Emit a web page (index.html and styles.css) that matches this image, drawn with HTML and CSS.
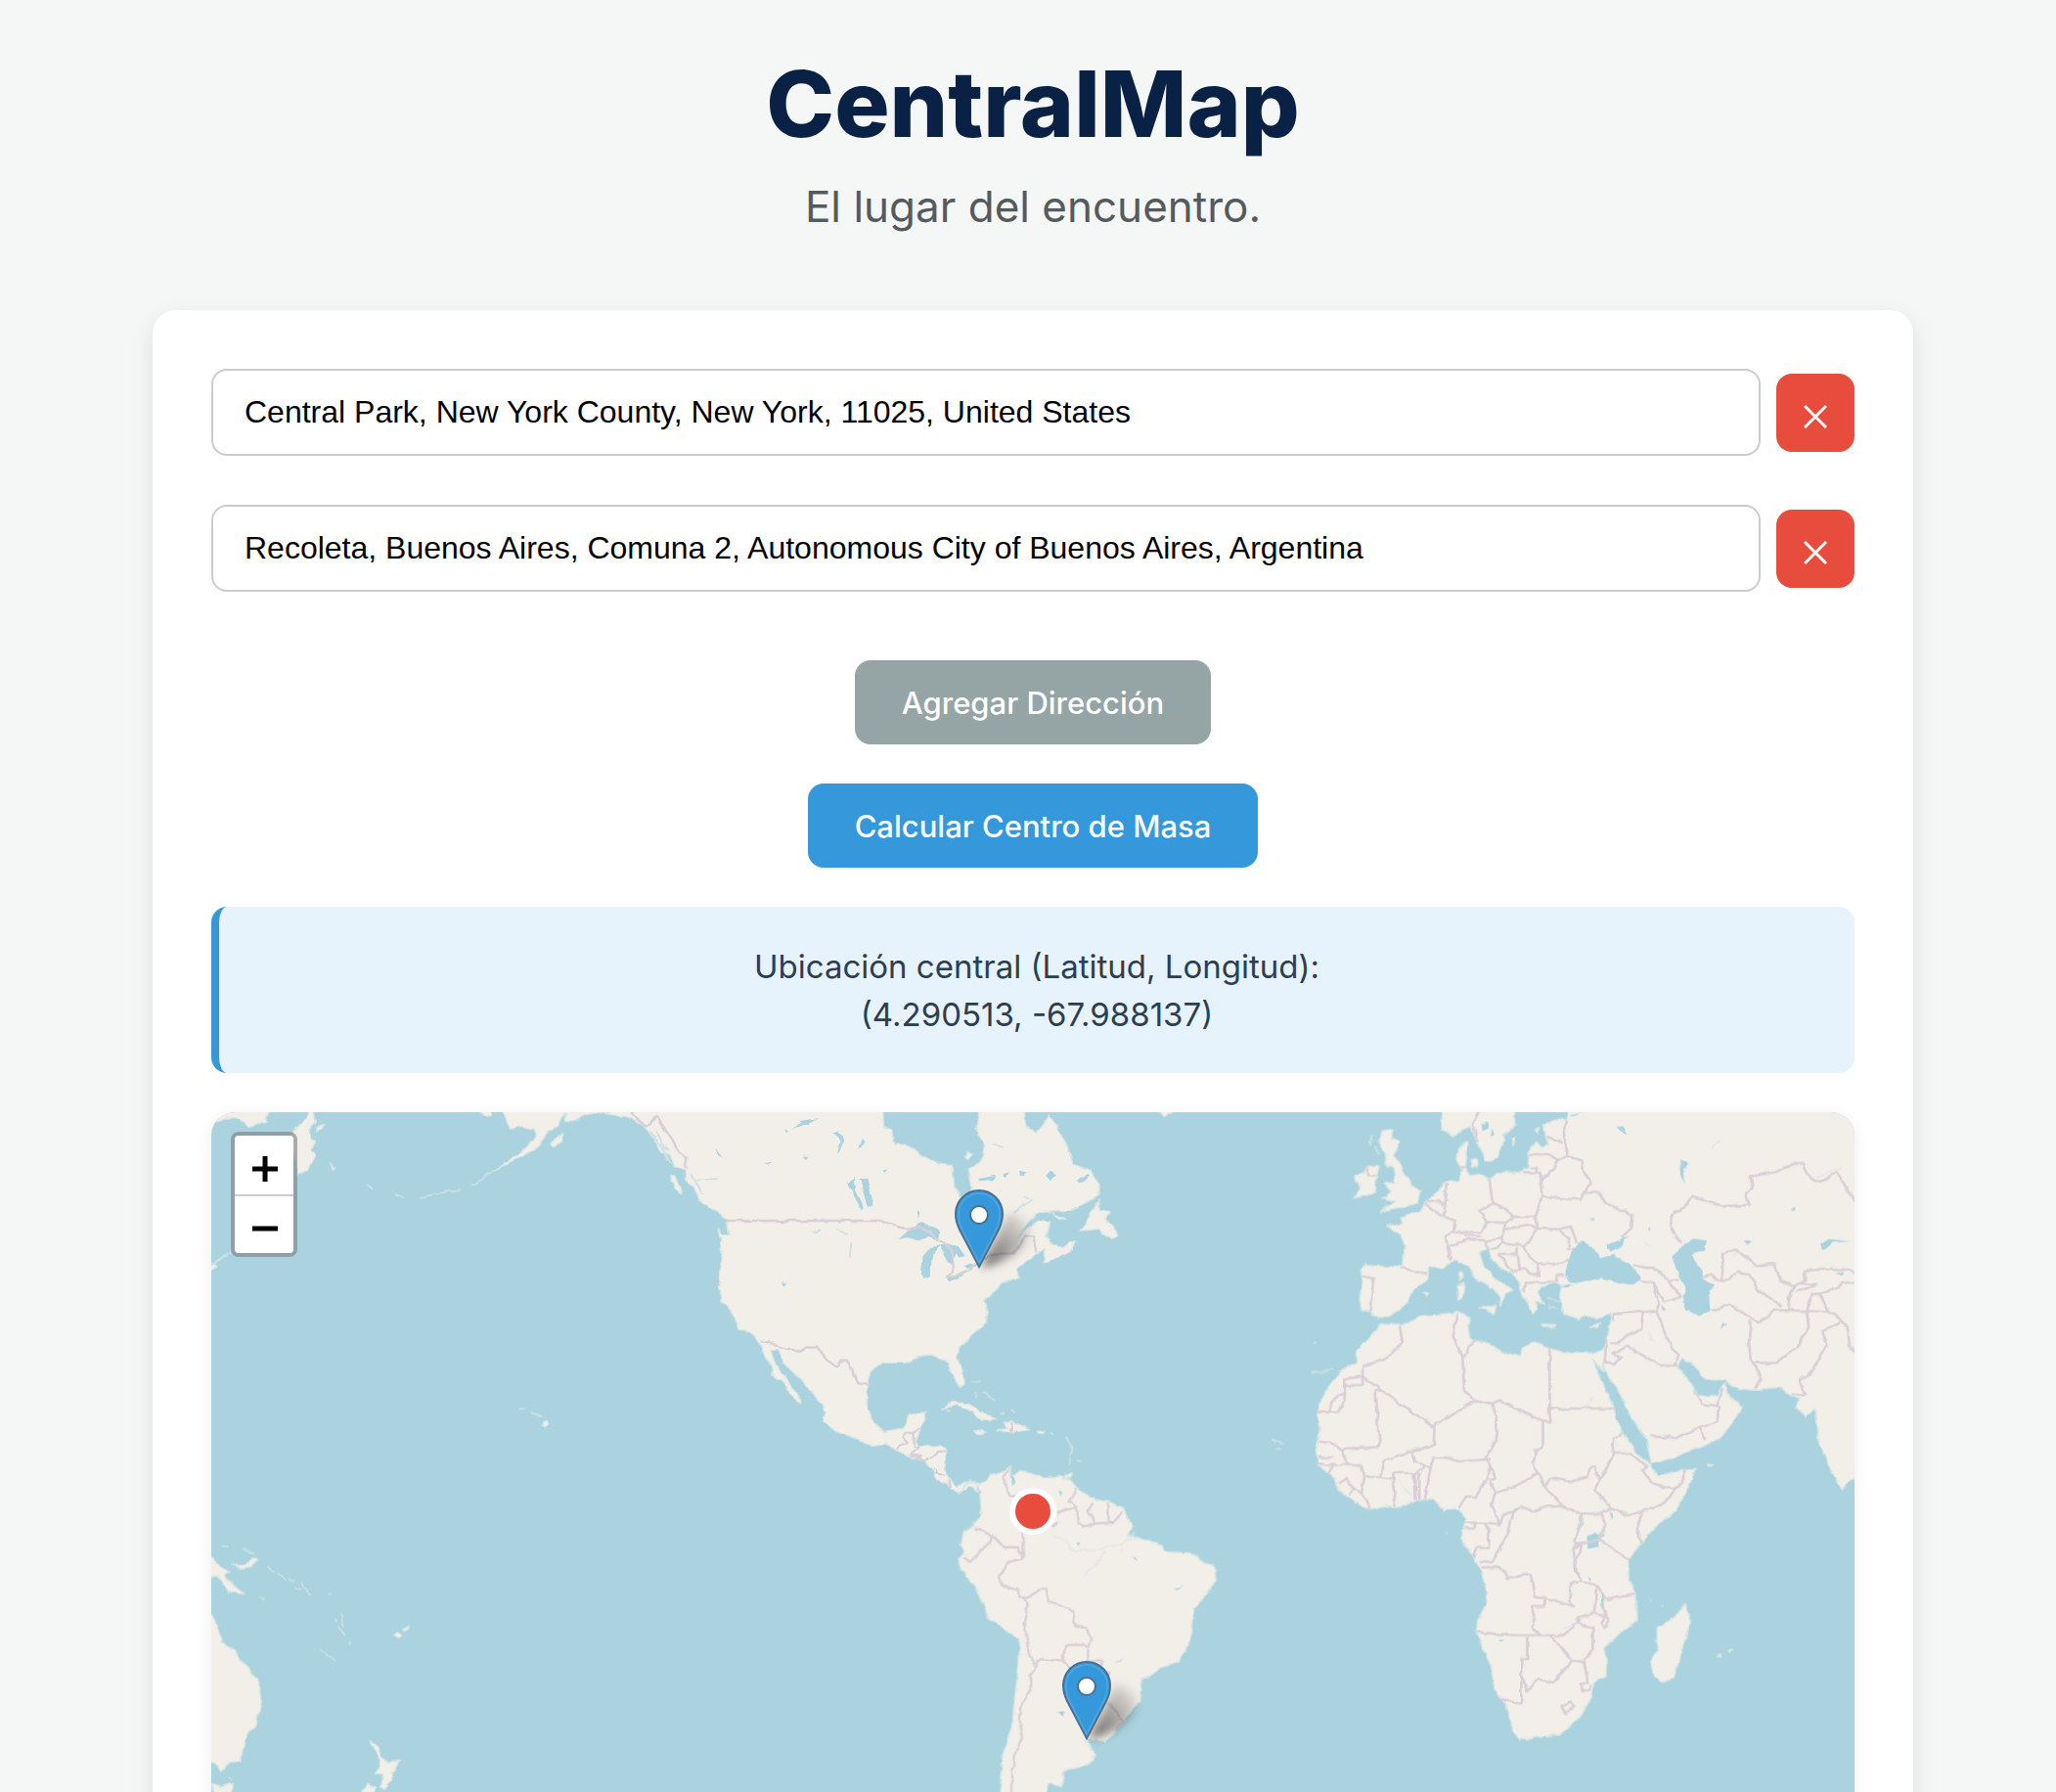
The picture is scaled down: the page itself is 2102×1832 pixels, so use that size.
FILE: index.html
```html
<!DOCTYPE html>
<html lang="es">
<head>
<meta charset="utf-8">
<meta name="viewport" content="width=device-width, initial-scale=1">
<title>CentralMap</title>
<link rel="stylesheet" href="styles.css">
</head>
<body>
<div class="page">
  <header class="header">
    <h1 class="title">CentralMap</h1>
    <p class="subtitle">El lugar del encuentro.</p>
  </header>
  <main class="card">
    <form class="form">
      <div class="addresses">
        <div class="address">
          <input class="address-input" type="text" aria-label="Dirección 1" value="Central Park, New York County, New York, 11025, United States">
          <button class="remove" type="button" aria-label="Eliminar dirección 1"><svg width="24" height="24" viewBox="0 0 24 24"><path d="M1 1 23 23M23 1 1 23"/></svg></button>
        </div>
        <div class="address">
          <input class="address-input" type="text" aria-label="Dirección 2" value="Recoleta, Buenos Aires, Comuna 2, Autonomous City of Buenos Aires, Argentina">
          <button class="remove" type="button" aria-label="Eliminar dirección 2"><svg width="24" height="24" viewBox="0 0 24 24"><path d="M1 1 23 23M23 1 1 23"/></svg></button>
        </div>
      </div>
      <button class="action action-add" type="button">Agregar Dirección</button>
      <button class="action action-calc" type="button">Calcular Centro de Masa</button>
    </form>
    <div class="result">
      <p>Ubicación central (Latitud, Longitud):</p>
      <p>(4.290513, -67.988137)</p>
    </div>
    <section class="map" aria-label="Mapa">
      <svg class="map-canvas" viewBox="0 0 1680 900" preserveAspectRatio="xMidYMin slice">
        <defs>
          <filter id="soft" x="-50%" y="-50%" width="200%" height="200%"><feGaussianBlur stdDeviation="5"/></filter>
          <filter id="rough" filterUnits="userSpaceOnUse" x="-20" y="-20" width="1720" height="940">
            <feTurbulence type="fractalNoise" baseFrequency="0.09" numOctaves="2" seed="4" result="n"/>
            <feDisplacementMap in="SourceGraphic" in2="n" scale="5" xChannelSelector="R" yChannelSelector="G"/>
          </filter>
          <linearGradient id="shade" x1="0" y1="1" x2="1" y2="0"><stop offset="0" stop-opacity=".6"/><stop offset="1" stop-opacity="0"/></linearGradient>
          <g id="pin">
            <path d="M2 0 14-24 30-56Q56-52 50-30 38-8 2 0Z" fill="url(#shade)" filter="url(#soft)"/>
            <path d="M0-1-20-39C-23-45-24-50-24-55A24 24 0 1 1 24-55C24-50 23-45 20-39Z" fill="#3498db" stroke="#4a6f8f" stroke-width="2"/>
            <path d="M0-5-18-40C-21-46-21-50-21-55A21 21 0 1 1 21-55C21-50 21-46 18-40Z" fill="none" stroke="#5dade2" stroke-width="2" opacity=".6"/>
            <circle cy="-54" r="9" fill="#fff" stroke="#4a6f8f" stroke-width="2"/>
          </g>
        </defs>
        <g filter="url(#rough)">
          <!-- North Pacific: Siberia, Kamchatka, Aleutians, Hawaii -->
          <g transform="translate(0 -7) scale(.357143 .333333)">
            <g class="land">
              <path d="M-20 0V45L20 50 40 42 75 42 95 52 110 68 130 60 160 52 155 38 170 0ZM290 0 300 50 280 75 285 100 298 110 285 140 298 150 275 200 245 215 238 150 230 85 270 40ZM765 10H800V32L780 34ZM970 118 985 95 1010 90 1003 112 980 125ZM1312 212 1328 218 1348 270 1330 258ZM948 968 958 964 966 976 955 988 947 982ZM-10 480 15 490 0 505ZM305 65 322 58 318 70 305 80ZM340 178 354 190 350 196Z"/>
            </g>
            <path class="isles" d="M810 200 780 222 745 245M715 258 650 270 600 283M550 285 525 273M462 260 445 245M885 930 900 932M912 942 945 955M0 490 55 452"/>
          </g>
          <!-- Melanesia, Australia, New Zealand -->
          <g transform="translate(-16 403) scale(.333333)">
            <path class="land" d="M20 140 48 155 75 185 105 198 90 212 120 245 150 270 105 262 75 222 48 215 20 200ZM110 180 150 180 175 158 192 160 170 185 145 193ZM20 310 48 335 62 350 80 415 122 440 135 475 155 485 190 535 202 600 185 670 165 695 145 740 140 780 105 785 80 810 48 785 20 790ZM50 850 80 860 115 850 110 900H55ZM608 395 620 385 630 395 620 406ZM630 378 652 367 648 378 635 382ZM535 718 560 740 570 765 590 785 628 780 605 820 600 845 580 868 565 860 575 825 550 820 565 800 565 765 540 738ZM500 895 525 850 555 862 545 895Z"/>
            <path class="isles" d="M220 180 240 202M252 205 278 232M287 218 305 228M305 250 322 254M325 235 350 270M145 128 180 145M82 122 100 122M382 440 430 478M425 345 432 355M445 325 452 370M436 368 458 395M470 412 474 426M192 280 212 287M408 270 416 268M105 830 112 840"/>
          </g>
          <!-- North and Central America -->
          <g transform="translate(424 -7) scale(.357143 .333333)">
            <path class="land" d="M-362 0-332 70-297 65-262 72-257 95-282 125-307 150-337 170-377 200-337 178-297 155-247 125-227 85-197 65-187 45-172 20-172 50-150 50-117 30-80 22 0 35 25 45 60 75 85 110 100 145 125 150 140 190 168 200 170 230 195 250 210 290 250 320 290 350 295 400 278 400 262 378 270 410 275 470 265 510 268 560 275 600 300 630 325 685 370 705 385 740 400 775 415 800 420 825 450 850 470 885 500 915 497 895 475 860 455 830 435 805 420 775 415 748 440 750 450 790 490 830 530 880 560 915 570 945 565 970 600 1000 640 1015 710 1045 745 1038 775 1060 820 1082 855 1090 880 1120 885 1145 925 1165 950 1188 985 1165 1010 1185 1030 1170 1015 1160 985 1152 945 1165 920 1140 912 1115 918 1055 900 1042 840 1045 830 1030 845 990 860 942 810 945 795 990 740 1000 710 975 690 930 690 870 697 820 735 790 800 790 830 775 870 768 920 785 930 820 955 865 970 855 965 820 948 775 955 740 990 705 1030 670 1035 640 1025 600 1055 570 1075 545 1125 530 1118 500 1150 475 1175 455 1200 440 1195 485 1230 465 1270 450 1290 420 1270 418 1250 435 1220 430 1205 400 1215 360 1180 355 1150 375 1120 410 1150 360 1185 325 1280 322 1320 300 1355 275 1355 240 1330 200 1280 180 1265 130 1240 80 1215 25 1205 45 1175 85 1145 65 1138 0H1015L1000 70 1025 110 1025 150 1010 180 980 195 990 250 985 272 960 280 940 245 935 185 895 180 850 155 800 120 770 120 760 75 738 65 735 0ZM1355 288 1335 320 1300 385 1350 380 1390 410 1405 400 1395 370 1370 355 1388 330 1355 322ZM900 930 935 910 980 915 1020 940 1060 965 1020 968 990 940 950 920ZM1060 995 1090 992 1082 972 1110 972 1155 992 1120 998 1105 1006ZM998 998 1020 995 1030 1003 1010 1008ZM1175 996H1198L1195 1004H1177ZM1222 330 1260 348 1240 350ZM1520 0 1540 35 1570 20V0ZM975 140 992 150 980 165 970 155Z"/>
            <path class="water" d="M780 412 820 372 850 360 900 388 895 415 865 405 835 415 805 405ZM868 435 900 430 885 450 872 475 870 525 855 535 845 520 850 460ZM900 430 945 425 970 460 960 470 945 455 935 490 920 480 905 450ZM920 535 950 515 985 505 960 525 930 540ZM965 498 990 485 1005 488 985 500ZM668 225 690 225 700 265 710 310 695 315 680 260ZM636 240 652 222 655 260 680 315 675 322 655 290 650 265ZM478 75 500 50 550 42 520 58ZM595 85 605 80 625 105 610 145 603 145 612 110ZM662 135 675 105 683 118ZM505 155H523L515 165ZM835 322 842 335 832 345ZM1125 200 1150 205 1135 220 1128 215ZM1202 215 1215 200 1232 215 1215 232ZM1285 232 1320 210 1325 215 1298 235ZM1010 225 1060 215 1055 228 1015 232ZM448 538 460 550 452 553ZM455 72 465 80 458 84ZM395 173 418 175 405 179ZM1098 1135 1112 1145 1110 1160 1100 1155ZM255 130 275 160 265 158ZM1078 215 1102 205 1085 222ZM735 200 750 195 740 207ZM880 1108 895 1128 905 1130 890 1132Z"/>
            <path class="fjord" d="M70 80 110 140 135 190M85 75 120 140M95 85 120 170M185 210 220 270M200 230 260 225M1050 120 1080 125M1110 330 1160 290 1140 280M530 390 560 382M600 380 635 395M645 420 640 470"/>
            <path class="border" d="M10 15 55 65 88 35 125 95 150 140 175 160 170 195M288 354H730L750 365 800 378 835 372 870 390 905 420 932 445 940 490 922 530 980 510 1000 485 1060 455 1110 455 1145 398 1165 400 1175 450M385 725 418 728 450 742 490 755 520 742 548 743 580 785 600 800 612 785 632 785 665 850 695 858M775 1058 785 1040 805 1035 790 1015 800 1005H825V1045L838 1050 815 1072 855 1090 895 1062 915 1060M825 1005 840 992M815 1072 850 1078M885 1130 912 1133M925 1150 930 1172M1105 975 1103 1005 1098 990"/>
            <path class="isles" d="M990 845 1015 850M1000 880 1008 895M1020 880 1055 905M1070 945 1085 948M1100 935 1110 945M1215 1000 1225 1008M1260 1015 1275 1050 1270 1100M1290 1088 1298 1092M920 935 930 938"/>
          </g>
          <!-- South America -->
          <g transform="translate(684 303) scale(.333333)">
            <path class="land" d="M240 262 262 230 290 225 300 240 340 205 375 195 405 178 400 210 430 190 460 195 500 210 545 208 585 220 600 240 640 275 700 285 745 305 772 360 760 385 800 400 865 420 870 435 950 440 1000 475 1025 480 1030 530 1000 570 965 610 955 690 940 740 910 780 860 795 800 835 795 890 760 940 715 1000 690 1020 635 1015 640 1030 658 1060 640 1095 560 1110 565 1140 555 1160 515 1150 500 1220H360L375 1100 370 1075 405 980 410 900 425 780 428 710 380 675 330 640 300 560 245 490 240 460 260 440 247 420 255 380 285 355 310 325 305 255 290 240 270 240ZM575 200H585V212L560 215Z"/>
            <path class="water" d="M398 208 408 208 415 225 402 235ZM548 250 558 255 552 268ZM545 930 565 928 560 945ZM598 408 610 410 605 420ZM775 455 785 458 782 468ZM432 652 450 665 440 668ZM722 780 740 765 735 775ZM900 555 930 545 910 558ZM525 365 545 345 540 358Z"/>
            <path class="river" d="M525 390 565 405 595 438 680 430 740 412 780 380M630 510 690 440M740 410V440M760 400 795 395"/>
            <path class="border" d="M405 182 380 205V225L398 265 440 268M285 365 340 388 380 425H425L437 460M340 388V405L275 470 255 455M437 460 395 470 365 515 375 545 420 555 425 577 455 577 490 555H510L515 590 590 620 598 665 630 670 645 705 637 735M430 380 440 400 437 460M442 580 452 605 442 650 450 720 470 785 495 768 555 775 600 810 640 850M637 735 627 725H570L560 745 562 775M637 740V775L675 775 680 805 700 812 690 850 650 870M470 785 480 790 460 820V860L430 920 425 960 435 1010 415 1050 410 1100 402 1110V1180M540 322 600 302 580 285 600 245M600 302 605 345 625 365 660 352 720 350 742 318M652 290 638 310 655 350M700 290V345M300 240 308 260M700 900 745 960 720 990M500 370 545 350"/>
          </g>
          <!-- Europe, Africa, Asia -->
          <g transform="translate(1084 -7) scale(.382653 .333333)">
            <path class="land" d="M790 0V42L760 45 722 60 730 90 740 120 725 125 705 110 688 140 685 190 665 205 620 205 580 225 560 210 530 215 515 190 520 150 522 110 500 130 495 170 508 200 500 230 470 235 445 260 410 300 395 325 345 345 350 360 305 370 345 400 355 430 352 490 320 495 250 490 238 500 243 540 235 595 240 630 260 632 285 655 330 635 365 605 370 580 418 530 420 495 460 497 490 475 520 490 545 530 590 560 612 590 610 615 625 580 645 570 620 545 590 525 565 485 555 450 575 440 600 490 640 515 660 540 670 580 700 640 712 625 705 600 730 610 710 570 720 555 760 545 775 550 770 580 780 640 820 655 840 645 870 655 908 640 900 700 885 750 850 760 800 760 740 745 700 725 670 740 665 770 610 755 580 730 530 715 525 680 530 650 495 635 400 645 345 675 290 670 265 710 230 750 225 790 180 820 155 860 125 920 120 945 130 1000 118 1060 125 1100 145 1120 170 1145 180 1180 220 1215 258 1240 300 1228 345 1232 385 1212 435 1210 460 1242 500 1240 520 1265 512 1300 505 1335 540 1385 557 1420 572 1480 575 1525 550 1580 548 1625 585 1710 595 1790 620 1830 640 1890 642 1920 665 1950 700 1937 770 1930 830 1870 858 1810 860 1770 897 1750 897 1700 890 1665 930 1620 975 1580 972 1500 955 1450 952 1395 990 1340 1030 1290 1080 1240 1115 1170 1132 1112 1030 1135 1015 1105 980 1070 955 1035 940 1005 920 960 915 925 885 850 855 775 885 815 885 790 890 815 930 880 955 950 1000 1020 1015 1100 1060 1085 1145 1050 1200 1020 1240 960 1258 925 1220 885 1210 850 1190 890 1140 890 1120 850 1085 800 1095 775 1120 790 1160 840 1210 840 1230 865 1290 875 1360 868 1390 895 1410 900 1400 925 1425 955 1450 930 1460 1020 1490 1110 1523 1178 1545 1150 1600 1100V0ZM455 0V70L485 95 530 65 550 110 565 145 570 175 605 160 620 110 618 90 650 60V0ZM295 80 325 75 318 100 345 110 325 155 345 175 350 205 370 230 375 250 397 260 390 300 350 312 290 325 330 295 297 285 320 265 300 240 330 235 325 190 300 180 305 150 285 115ZM258 185 288 190 280 220 278 265 220 285 235 250 222 215 250 205ZM500 510 510 508 512 530 502 540ZM495 555 515 545 510 590 498 595ZM555 618 600 615 595 640ZM720 670 760 673 755 680 725 678ZM850 680 880 670 870 685ZM405 575 420 572 415 585ZM530 170 545 165 552 185 535 190ZM640 100 652 98 645 125ZM700 75 715 70 712 85ZM1103 1527 1120 1585 1100 1660 1075 1755 1045 1770 1022 1750 1015 1700 1030 1670 1030 1600 1080 1570ZM1165 1100 1180 1103 1172 1108ZM1190 1685 1200 1683 1198 1693ZM1220 1672 1232 1668 1225 1680Z"/>
            <path class="water" d="M835 418 860 440 880 470 915 455 945 480 975 505 990 535 965 550 930 545 880 528 830 545 795 540 785 510 800 450 820 420ZM893 430 955 400 925 440 905 445ZM770 552 805 548 790 560ZM1100 430 1130 408 1160 415 1155 445 1120 455 1150 510 1155 530 1185 550 1168 570 1172 635 1145 645 1105 625 1100 590 1105 560 1080 500 1070 460ZM1465 425 1485 410 1550 418 1500 420 1475 448ZM558 60 575 50 580 70 560 80ZM590 70 595 90 585 100ZM925 65 940 65 950 90 930 80ZM1090 170 1115 178 1100 195 1102 235 1092 210ZM1262 415 1285 420 1270 430ZM1505 515 1530 512 1525 522ZM848 342 862 348 858 355ZM842 1325 865 1310 888 1318 875 1335 870 1355 845 1360ZM903 1240 910 1250 915 1270 908 1265ZM805 1400 812 1420 828 1455 820 1450 808 1425ZM878 1480 885 1500 890 1560 882 1540ZM845 1442 855 1455 850 1460ZM1205 670 1215 675 1200 685ZM1040 610 1052 625 1045 630ZM1390 315 1400 312 1398 325ZM1008 380 1015 370 1010 388ZM608 1640 622 1638 615 1645ZM820 1288 835 1278 825 1295ZM798 28 830 20 800 35Z"/>
            <path class="river" d="M1175 130 1195 110M1240 440 1235 465M860 895 840 925M1000 420 1015 430M355 1170 370 1200M1010 695 1020 725M780 1605 800 1595M920 1035 928 1045M1460 220 1525 190"/>
            <path class="border" d="M553 20 538 60 550 110M790 45 780 75 788 155 830 170 835 215 855 235 838 265 875 265 890 300 965 335 962 375 935 405M735 95 775 115M690 150H740L765 168 788 155M765 168 740 215 720 225 717 210 670 208M690 190 708 192V208M720 225 725 280 825 290 838 265M725 280 705 345 708 378M582 225 590 300 620 315 650 342H705M590 300 555 325 575 358 625 360 650 342M560 388 485 390 490 355 460 340 470 240M410 302 455 340M415 295 445 290 460 305M485 390 465 405 470 430 478 475M470 430 490 428 525 410 575 415 615 408 625 360M515 398 560 402M575 358 562 388M625 380 690 368 708 378 770 380 800 372 815 420M770 380 795 410 793 440 808 440M708 378 690 415 675 430 615 420 615 408M575 418 578 445 605 435 615 420M675 430 690 465 712 485 775 485 795 475M605 455 655 455 655 435M605 455 645 512 660 500 655 455M660 500 680 500 690 520 712 520 712 485M675 570 680 545 765 540 762 520 785 522M345 497 375 510 415 515M240 525 273 530 262 632M500 190H515M258 185V215H278M965 490 1030 505 1065 540 1090 535M985 535 1020 545 1050 600 1095 590 1060 540M1020 545 1032 605V630L915 640 912 660M1032 630 1050 700 1085 770 1075 795 1040 798 950 740 910 760 935 770 915 795 890 790 895 710M990 635 985 685 920 730 905 730M1095 425 1065 375 1075 325 1090 325 1125 280 1200 310 1280 305 1265 275 1285 255 1280 218 1345 205 1395 180H1420L1430 210 1465 235 1510 205 1540 260 1570 310M1155 525 1175 518 1195 540H1205V455L1240 442 1295 490 1345 487 1360 540 1395 555 1425 535 1425 510 1480 500 1545 505 1570 520M1205 540 1245 512 1275 520 1300 565 1360 615M1175 630 1225 612 1270 640 1300 670 1345 628 1430 630 1445 580 1480 575 1530 545 1570 540M1395 555 1380 590 1385 630M1405 545 1455 550 1430 565 1400 570M1280 660 1275 720 1280 780 1308 840 1290 870M1280 790H1350L1405 740 1435 680 1430 630 1500 635 1525 665 1540 690 1545 745 1570 765M1525 665 1470 690 1485 735 1440 820 1410 840 1428 885 1390 890M1465 580 1490 635M1085 795H1075M1130 880 1150 915 1190 922 1205 870M1195 922 1190 970 1145 985 1080 1020 1010 1015M1145 985 1158 1030M343 678 350 730 300 780 243 800V858H195V905L180 942H118M243 800V832L430 985 548 905 515 880 510 770 485 710 495 640M515 770 543 715M548 905 590 915 608 905 725 970H743V745M743 930H918M725 970V1045L705 1060 700 1100 710 1130 730 1170M243 832 193 838 195 880 160 910 155 940M275 875 290 1048 195 1052 190 1060 160 1035 128 1032M275 875H295M435 985 433 1040 425 1048 375 1058 300 1090 290 1140H248L240 1105 200 1103 190 1060M125 1080H165M122 1095 165 1103 200 1103M590 915 603 960 598 1030 575 1080 585 1100 598 1145 580 1150M375 1060 385 1095 425 1110 430 1080 465 1080 500 1092 585 1085M425 1110 410 1210M385 1095 410 1105 385 1130V1210M290 1140 325 1145V1128H378L380 1210M325 1145 330 1190 325 1228M395 1130V1208M248 1140 240 1190 258 1215V1240M180 1160 200 1145 220 1175 240 1190M205 1195 220 1175M150 1130 165 1105M585 1105 575 1140 545 1200 520 1200 500 1235M580 1150 600 1187 650 1170 710 1130M598 1187 588 1225 610 1285 580 1280H515M730 1170 745 1142 800 1155 845 1140 850 1108H862L875 1150 910 1080 915 1020 940 1005M910 1065 960 1065 1005 1110 990 1120 1020 1160 1080 1180 1100 1155V1120M1080 1180 1040 1230 990 1245 950 1258 905 1235 865 1180 875 1145M730 1170 780 1230 825 1252H875L905 1235M610 1285 620 1255 645 1250 665 1230 700 1245 730 1230 780 1230M645 1250 633 1310 605 1370 590 1400 555 1398M515 1298H543V1280M567 1280 582 1300 580 1357H550L540 1385M560 1417H612L630 1453 672 1437 692 1440 702 1505 730 1510 805 1535M730 1510V1538H698V1600L715 1625M548 1615 570 1618 650 1625 780 1625 820 1585 858 1605V1670L835 1705H805L745 1625M683 1630V1698H667V1830L645 1835 615 1820M667 1755 683 1795 715 1760 750 1770 805 1705M835 1705 845 1770 828 1775 830 1800 850 1795 853 1775M775 1845 795 1828 808 1840 785 1868ZM828 1252 825 1290 812 1330V1345L875 1332 892 1285 880 1245M875 1332 955 1395M990 1250 980 1280V1325L990 1345M812 1345 803 1360 815 1430 830 1460 875 1480 887 1510 900 1515 972 1500M808 1360 828 1345 825 1370 812 1390M830 1460 800 1465 795 1520 812 1535M868 1478 862 1555 820 1570 820 1585M862 1555 890 1565 882 1590 892 1607 902 1580 882 1535"/>
            <path class="isles" d="M270 90 265 120M275 125 290 150M112 725H122M105 820 135 818 165 808M0 1025 35 1035M10 1055 25 1050M740 620 760 625M735 590 770 600M465 1312H470M1015 1520H1018M1040 1535H1045M1130 870V885"/>
          </g>
        </g>
        <use href="#pin" x="785" y="159"/>
        <use href="#pin" x="895" y="641"/>
        <circle cx="840" cy="408" r="21" fill="#e74c3c" stroke="#fff" stroke-width="6"/>
      </svg>
      <div class="zoom">
        <button class="zoom-btn" type="button" aria-label="Acercar"><svg width="26" height="26" viewBox="0 0 26 26"><path d="M0 13H26M13 0V26"/></svg></button>
        <button class="zoom-btn" type="button" aria-label="Alejar"><svg width="26" height="26" viewBox="0 0 26 26"><path d="M0 13H26"/></svg></button>
      </div>
    </section>
  </main>
</div>
</body>
</html>
```
FILE: styles.css
```css
* {
  box-sizing: border-box;
}

body {
  margin: 0;
  background: #f5f7f6;
  color: #2c3e50;
  font-family: Inter, "Liberation Sans", sans-serif;
}

h1,
p {
  margin: 0;
}

button {
  border: 0;
  font-family: inherit;
  cursor: pointer;
}

.page {
  height: 100vh;
  overflow: hidden;
  padding: 46px 40px 0 50px;
}

.header {
  display: flex;
  flex-direction: column;
  align-items: center;
  padding-bottom: 74px;
  text-align: center;
}

.title {
  color: #0a2146;
  font-size: 94px;
  font-weight: 800;
  line-height: 120px;
}

.subtitle {
  margin-top: 13px;
  color: #555a5e;
  font-size: 44px;
  line-height: 64px;
}

.card {
  max-width: 1800px;
  margin: 0 auto;
  padding: 60px;
  background: #fff;
  border-radius: 24px;
  box-shadow: 0 8px 24px rgba(0, 0, 0, 0.1);
}

.form {
  display: flex;
  flex-direction: column;
  align-items: center;
  gap: 40px;
}

.addresses {
  display: flex;
  flex-direction: column;
  gap: 50px;
  width: 100%;
  padding-bottom: 30px;
}

.address {
  display: flex;
  align-items: center;
  gap: 16px;
}

.address-input {
  flex: 1;
  min-width: 0;
  height: 89px;
  padding: 0 32px;
  border: 2px solid #ccc;
  border-radius: 16px;
  background: #fff;
  color: #000;
  font-family: "Liberation Sans", Arial, sans-serif;
  font-size: 32px;
}

.remove {
  display: grid;
  place-items: center;
  width: 80px;
  height: 80px;
  padding: 8px 0 0;
  border-radius: 16px;
  background: #e74c3c;
}

.remove path {
  fill: none;
  stroke: #fff;
  stroke-width: 3;
}

.action {
  height: 86px;
  padding: 0 48px;
  border-radius: 16px;
  color: #fff;
  font-size: 31px;
  font-weight: 500;
}

.action-add {
  background: #95a5a6;
}

.action-calc {
  background: #3498db;
}

.result {
  margin-top: 40px;
  padding: 37px 40px 35px;
  border-left: 8px solid #3498db;
  border-radius: 16px;
  background: #e6f3fd;
  font-size: 33px;
  line-height: 49px;
  text-align: center;
}

.map {
  position: relative;
  height: 900px;
  margin-top: 40px;
  overflow: hidden;
  border-radius: 24px;
  background: #aad3df;
  box-shadow: 0 4px 16px rgba(0, 0, 0, 0.08);
}

.map-canvas {
  display: block;
  width: 100%;
  height: 100%;
}

.land {
  fill: #f2efe9;
  stroke: #d6e4e2;
  stroke-width: 4;
  stroke-linejoin: round;
}

.water {
  fill: #aad3df;
}

.border,
.fjord,
.river,
.isles {
  fill: none;
  stroke-linejoin: round;
}

.border {
  stroke: #dacfd6;
  stroke-width: 7;
}

.fjord {
  stroke: #cfe0e2;
  stroke-width: 5;
}

.river {
  stroke: #e0e6e5;
  stroke-width: 4;
}

.isles {
  stroke: #c8dfe2;
  stroke-width: 6;
}

.zoom {
  position: absolute;
  top: 20px;
  left: 20px;
  width: 68px;
  border: 4px solid rgba(125, 125, 130, 0.6);
  border-radius: 8px;
  background-clip: padding-box;
}

.zoom-btn {
  display: grid;
  place-items: center;
  width: 60px;
  height: 60px;
  padding: 8px 0 0 2px;
  background: #fff;
}

.zoom-btn:first-child {
  border-radius: 4px 4px 0 0;
}

.zoom-btn:last-child {
  border-top: 2px solid #ccc;
  border-radius: 0 0 4px 4px;
}

.zoom-btn path {
  fill: none;
  stroke: #000;
  stroke-width: 5;
}
```
